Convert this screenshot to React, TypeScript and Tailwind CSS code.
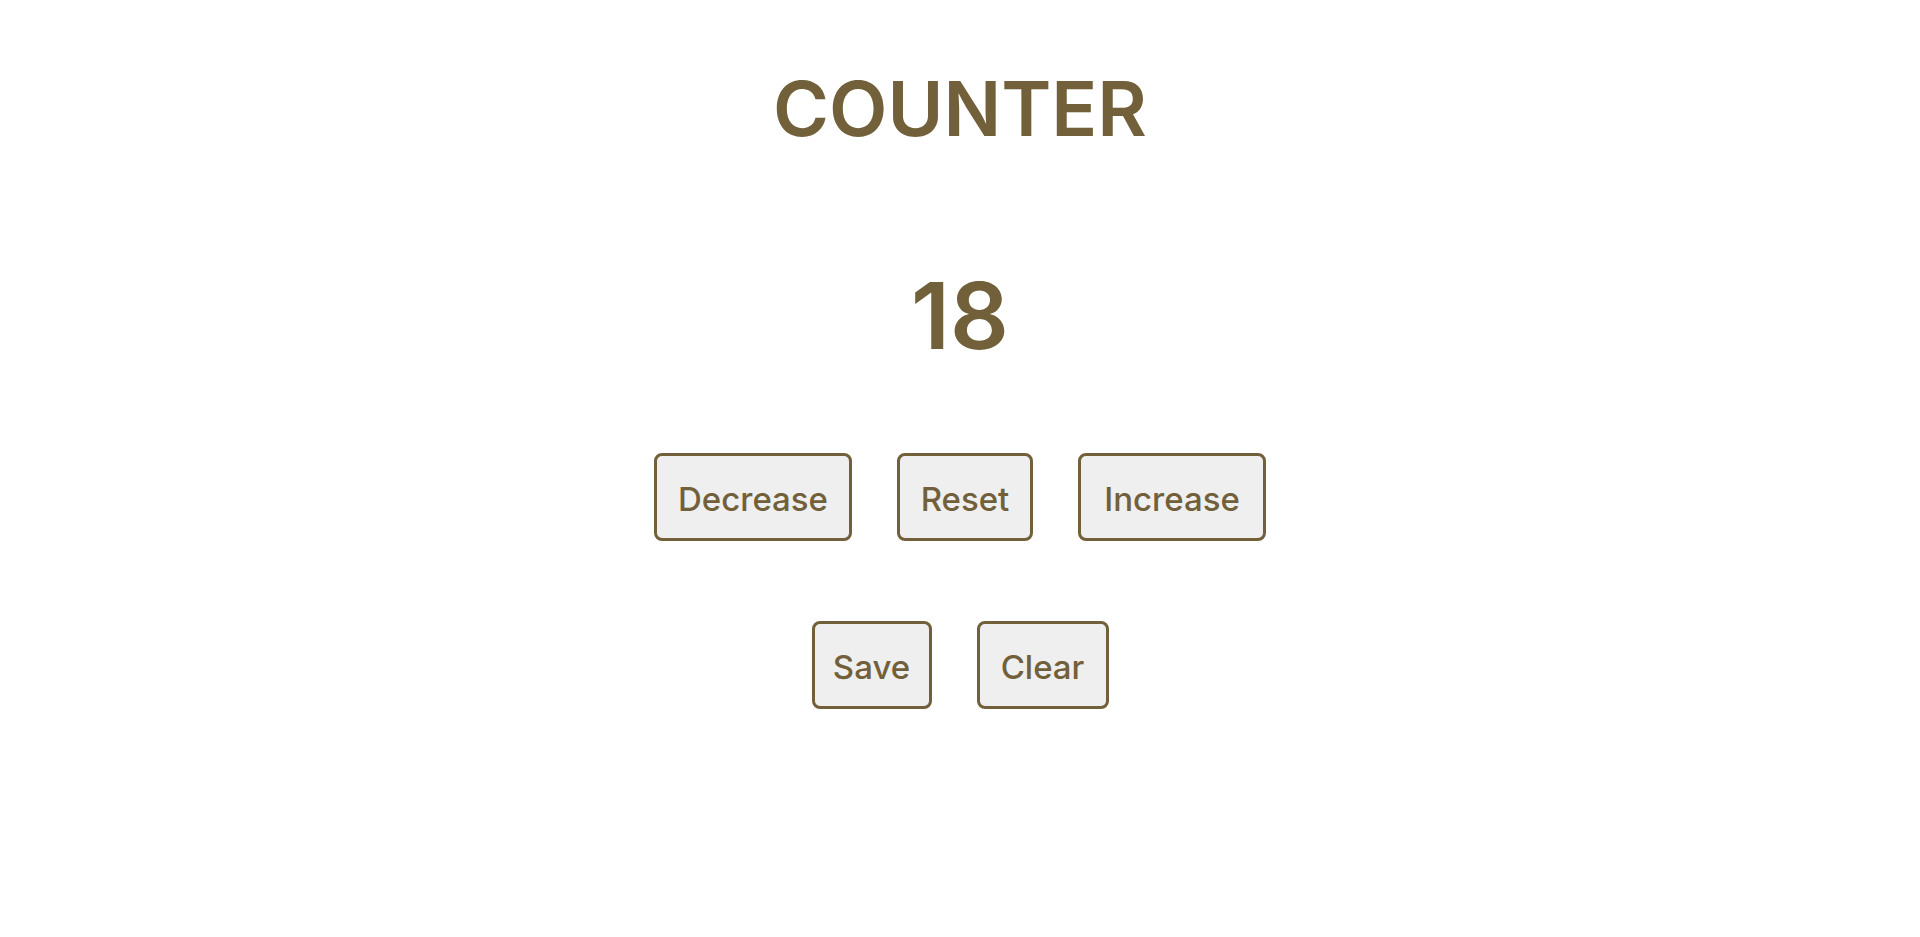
import { useState } from "react";

type ActionButtonProps = {
  label: string;
  width: string;
  onClick: () => void;
};

function ActionButton({ label, width, onClick }: ActionButtonProps) {
  return (
    <button
      type="button"
      onClick={onClick}
      className={`h-22 cursor-pointer rounded-lg border-3 border-[#71603a] bg-[#efefef] px-3 pt-1 text-[33px] leading-10 font-medium ${width}`}
    >
      {label}
    </button>
  );
}

export default function App() {
  const [count, setCount] = useState(18);

  return (
    <main className="flex min-h-screen flex-col items-center bg-white font-['Inter',sans-serif] text-[#71603a]">
      <h1 className="mt-15 text-[76px] leading-24 font-semibold">COUNTER</h1>
      <output className="mt-25 text-[92px] leading-30 font-semibold">{count}</output>
      <div className="mt-[77px] flex flex-wrap justify-center gap-[45px]">
        <ActionButton label="Decrease" width="min-w-[198px]" onClick={() => setCount(count - 1)} />
        <ActionButton label="Reset" width="min-w-[136px]" onClick={() => setCount(0)} />
        <ActionButton label="Increase" width="min-w-[188px]" onClick={() => setCount(count + 1)} />
      </div>
      <div className="mt-20 flex flex-wrap justify-center gap-[45px]">
        <ActionButton label="Save" width="min-w-[120px]" onClick={() => localStorage.setItem("count", String(count))} />
        <ActionButton label="Clear" width="min-w-[132px]" onClick={() => localStorage.removeItem("count")} />
      </div>
    </main>
  );
}
